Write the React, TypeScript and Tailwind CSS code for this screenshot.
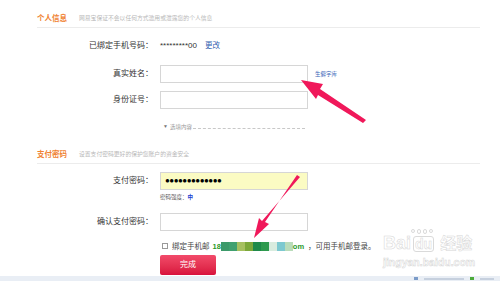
const font = { fontFamily: '"Liberation Sans", "Noto Sans CJK SC", sans-serif' };

function Row({ label, children, className = '' }: { label: string; children?: React.ReactNode; className?: string }) {
  return (
    <div className={`flex items-center ${className}`}>
      <div className="w-[123px] shrink-0 pr-[7px] text-right text-[8px] text-[#333]">{label}</div>
      {children}
    </div>
  );
}

function Input({ yellow = false, children }: { yellow?: boolean; children?: React.ReactNode }) {
  return (
    <div
      className={`flex h-[18px] w-[148px] items-center border border-[#d6d6d6] px-[4px] ${
        yellow ? 'bg-[#fbfbc3]' : 'bg-white'
      }`}
    >
      {children}
    </div>
  );
}

function SectionHead({ title, note }: { title: string; note: string }) {
  return (
    <div className="flex h-[14px] items-center border-b border-[#ececec] pb-[4px]">
      <span className="w-[42px] text-[7.5px] font-bold text-[#f08232]">{title}</span>
      <span className="text-[5.8px] text-[#b8b8b8]">{note}</span>
    </div>
  );
}

function Arrows() {
  return (
    <svg className="pointer-events-none absolute inset-0" width="500" height="281" viewBox="0 0 500 281">
      <g fill="#f0185a">
        <polygon points="366,120 363,123 318,95 316,99 301,80 323,84 320,89" />
        <polygon points="300,177 297,175 265,222 269,224 254,238 259,218 262,221" />
      </g>
    </svg>
  );
}

function Watermark() {
  return (
    <div
      className="pointer-events-none absolute left-[383px] top-[229px] flex flex-col text-white"
      style={{ WebkitTextStroke: '0.5px #d6d6d6' }}
    >
      <div className="ml-[28px] flex gap-[2px]">
        <span className="h-[4px] w-[4px] rounded-full border border-[#dadada]" />
        <span className="h-[5px] w-[4px] rounded-full border border-[#dadada]" />
        <span className="h-[5px] w-[4px] rounded-full border border-[#dadada]" />
        <span className="h-[4px] w-[4px] rounded-full border border-[#dadada]" />
      </div>
      <div className="flex items-end leading-none">
        <span className="text-[18px] font-bold">Bai</span>
        <span className="ml-[2px] rounded-[3px] border border-[#dadada] px-[1px] text-[14px] font-bold">du</span>
        <span className="ml-[6px] text-[16px] font-bold">经验</span>
      </div>
      <div className="mt-[5px] text-[10.5px] font-bold leading-none">jingyan.baidu.com</div>
    </div>
  );
}

export default function App() {
  return (
    <div className="relative h-[281px] w-[500px] overflow-hidden bg-white" style={font}>
      <Watermark />
      <div className="relative ml-[37px] w-[443px] pt-[14px]">
        <SectionHead title="个人信息" note="网易宝保证不会以任何方式滥用或泄露您的个人信息" />

        <Row label="已绑定手机号码：" className="mt-[12px] h-[12px]">
          <span className="text-[8px] text-[#333]">*********00</span>
          <span className="ml-[8px] text-[7.5px] text-[#2f5fb0]">更改</span>
        </Row>

        <Row label="真实姓名：" className="mt-[13px]">
          <Input />
          <span className="ml-[7px] mt-[1px] text-[5.5px] text-[#3a67b8]">生僻字库</span>
        </Row>

        <Row label="身份证号：" className="mt-[8px]">
          <Input />
        </Row>

        <div className="ml-[126px] mt-[14px] flex w-[142px] items-center">
          <span className="text-[5px] text-[#777]">▼</span>
          <span className="ml-[2px] text-[5.5px] text-[#999]">选填内容</span>
          <span className="ml-[1px] mt-[2px] flex-1 border-b border-dashed border-[#c8c8c8]" />
        </div>

        <div className="mt-[19px]">
          <SectionHead title="支付密码" note="设置支付密码更好的保护您账户的资金安全" />
        </div>

        <Row label="支付密码：" className="mt-[8px]">
          <Input yellow>
            <span className="text-[8px] leading-none tracking-[-0.5px] text-black">●●●●●●●●●●●●●</span>
          </Input>
        </Row>

        <div className="ml-[123px] mt-[3px] flex text-[5.5px] leading-[8px]">
          <span className="text-[#555]">密码强度：</span>
          <span className="font-bold text-[#1a3fd0]">中</span>
        </div>

        <Row label="确认支付密码：" className="mt-[12px]">
          <Input />
        </Row>

        <div className="ml-[125px] mt-[10px] flex h-[10px] items-center text-[7.5px] text-[#444]">
          <span className="h-[6px] w-[6px] border border-[#999] bg-white" />
          <span className="ml-[4px]">绑定手机邮</span>
          <span className="ml-[3px] font-bold text-[#2a9a2a]">18</span>
          <span className="flex h-[9px]">
            <span className="w-[8px] bg-[#3c9a6a]" />
            <span className="w-[8px] bg-[#40a070]" />
            <span className="w-[8px] bg-[#a6c060]" />
            <span className="w-[8px] bg-[#7ca83a]" />
            <span className="w-[8px] bg-[#1f8a4a]" />
            <span className="w-[8px] bg-[#2e9a4e]" />
            <span className="w-[8px] bg-[#d9ecdf]" />
            <span className="w-[8px] bg-[#7dc9d0]" />
            <span className="w-[8px] bg-[#b9dcba]" />
          </span>
          <span className="font-bold text-[#2a9a2a]">om</span>
          <span className="ml-[4px]">，可用手机邮登录。</span>
        </div>

        <div className="ml-[123px] mt-[-1px]">
          <button className="h-[20px] w-[56px] rounded-[2px] bg-gradient-to-b from-[#f24a6a] to-[#d8103c] text-[8px] text-white">
            完成
          </button>
        </div>
      </div>

      <div className="absolute bottom-0 left-0 right-0 flex h-[5px] items-center justify-end gap-[6px] bg-[#e9eef5] pr-[6px]">
        <span className="h-[3px] w-[4px] bg-[#7b9bc8]" />
        <span className="h-[2px] w-[40px] bg-[#c6d0de]" />
        <span className="h-[3px] w-[4px] bg-[#4caa3a]" />
        <span className="h-[2px] w-[14px] bg-[#c6d0de]" />
      </div>

      <Arrows />
    </div>
  );
}
